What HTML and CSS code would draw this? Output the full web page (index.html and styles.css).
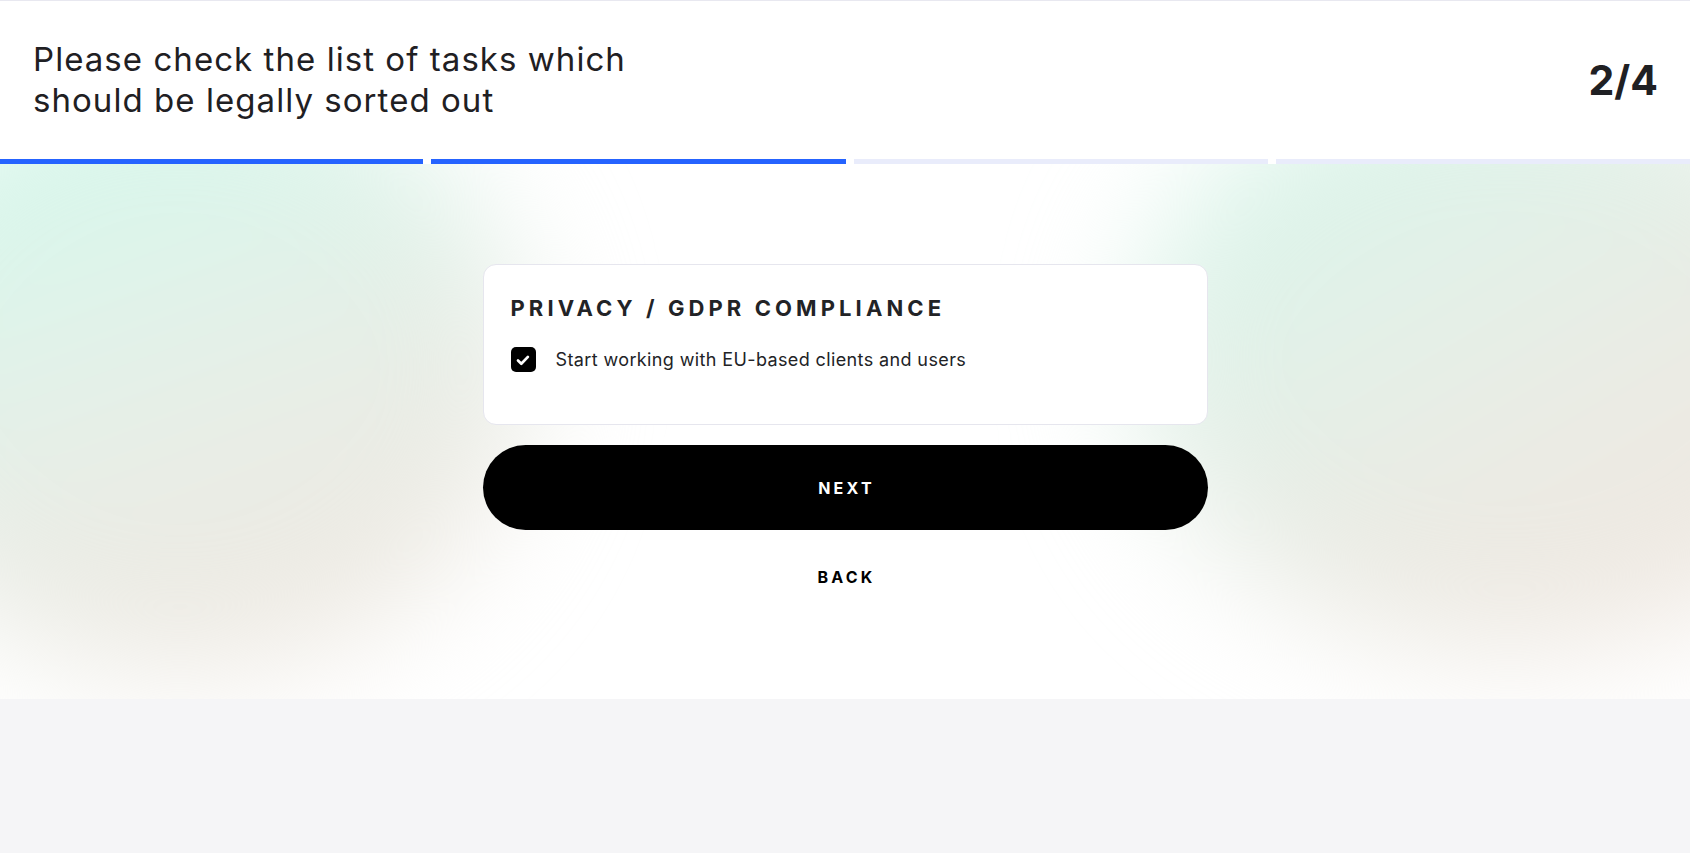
FILE: index.html
```html
<!DOCTYPE html>
<html lang="en">
<head>
<meta charset="utf-8">
<title>Legal checklist</title>
<link rel="stylesheet" href="styles.css">
</head>
<body>
<header class="header">
  <h1 class="title">Please check the list of tasks which<br>should be legally sorted out</h1>
  <div class="count">2/4</div>
</header>
<div class="progress">
  <span class="seg seg-done"></span>
  <span class="seg seg-done"></span>
  <span class="seg"></span>
  <span class="seg"></span>
</div>
<main class="stage">
  <div class="blob blob-left"></div>
  <div class="blob blob-right"></div>
  <div class="content">
    <section class="card">
      <h2 class="card-title">PRIVACY / GDPR COMPLIANCE</h2>
      <ul class="list">
        <li class="item">
          <span class="check">
            <svg viewBox="0 0 24 24" width="24" height="24"><path d="M7 12.5l3.3 3.2 6.6-6.8" fill="none" stroke="#fff" stroke-width="2.7" stroke-linecap="round" stroke-linejoin="round"/></svg>
          </span>
          <span class="item-text">Start working with EU-based clients and users</span>
        </li>
      </ul>
    </section>
    <button class="btn-next">NEXT</button>
    <a class="btn-back" href="#">BACK</a>
  </div>
</main>
<footer class="footer"></footer>
</body>
</html>
```

FILE: styles.css
```css
* { box-sizing: border-box; }
html, body { margin: 0; padding: 0; }
body {
  font-family: Inter, "Noto Sans", sans-serif;
  color: #202124;
  background: #f5f5f7;
}
.header {
  height: 159px;
  border-top: 1px solid #e8e8f0;
  background: #fff;
  display: flex;
  align-items: center;
  justify-content: space-between;
  padding: 0 32px 0 33px;
}
.title {
  margin: 0;
  font-size: 33px;
  line-height: 41px;
  font-weight: 400;
  letter-spacing: 1.05px;
  color: #1f2023;
}
.count {
  font-size: 41px;
  font-weight: 700;
  color: #1f2023;
  line-height: 1;
}
.progress {
  display: grid;
  grid-template-columns: 423fr 414fr 414fr 414fr;
  column-gap: 8px;
  height: 5px;
  background: #fff;
}
.seg { background: #e9ecfb; }
.seg-done { background: #2563ff; }
.stage {
  position: relative;
  overflow: hidden;
  background: #fff;
  height: 535px;
}
.blob {
  position: absolute;
  border-radius: 50%;
  filter: blur(60px);
}
.blob-left {
  left: -170px;
  top: -100px;
  width: 700px;
  height: 610px;
  background: linear-gradient(160deg, #cff8e9 0%, #dcf5eb 30%, #e9ede6 60%, #f1e7e0 100%);
}
.blob-right {
  left: 1130px;
  top: -100px;
  width: 760px;
  height: 590px;
  background: linear-gradient(150deg, #d2f7e9 0%, #e0f2e9 30%, #ebebe4 60%, #f2e6df 100%);
}
.content {
  position: relative;
  width: 725px;
  margin: 0 auto;
  padding-top: 100px;
  display: flex;
  flex-direction: column;
  align-items: stretch;
}
.card {
  background: #fff;
  border: 1px solid #e6e6ee;
  border-radius: 13px;
  padding: 29px 27px 28px;
}
.card-title {
  margin: 0 0 25px;
  font-size: 22px;
  line-height: 28px;
  font-weight: 700;
  letter-spacing: 4.1px;
  color: #222326;
}
.list {
  list-style: none;
  margin: 0 0 24px;
  padding: 0;
}
.item {
  display: flex;
  align-items: center;
  gap: 20px;
}
.check {
  width: 25px;
  height: 25px;
  border-radius: 5px;
  background: #000;
  display: flex;
  align-items: center;
  justify-content: center;
  flex: none;
}
.check svg { display: block; }
.item-text {
  font-size: 18px;
  line-height: 24px;
  letter-spacing: 0.38px;
  color: #222326;
}
.btn-next {
  margin-top: 20px;
  height: 85px;
  border: 0;
  border-radius: 43px;
  background: #000;
  color: #fff;
  font-family: inherit;
  font-size: 16px;
  font-weight: 700;
  letter-spacing: 3.2px;
  padding: 0 0 0 3px;
  cursor: pointer;
}
.btn-back {
  align-self: center;
  margin-top: 35px;
  font-size: 16px;
  line-height: 24px;
  font-weight: 700;
  letter-spacing: 3.2px;
  padding-left: 3px;
  color: #000;
  text-decoration: none;
}
.footer {
  height: 154px;
  background: #f5f5f7;
}
```
